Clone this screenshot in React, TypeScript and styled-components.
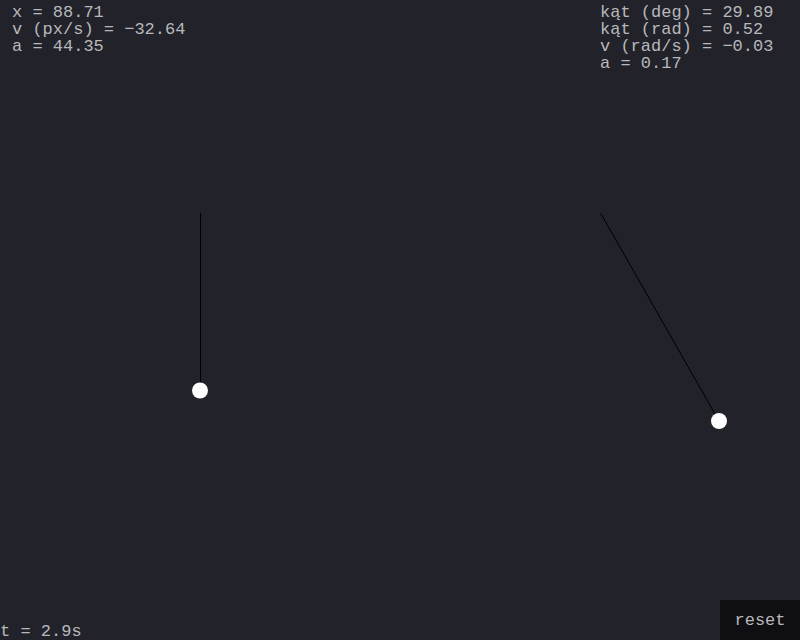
import React from "react";
import styled, { createGlobalStyle } from "styled-components";

const GlobalStyle = createGlobalStyle`
  html, body, #root { height: 100%; }
  body {
    margin: 0;
    overflow: hidden;
    background: #22222a;
    color: #b8b8ba;
    font: 17px/17px "Liberation Mono", "Courier New", monospace;
  }
`;

const Page = styled.main`
  position: relative;
  display: grid;
  grid-template-columns: 3fr 1fr;
  grid-template-rows: 1fr auto;
  height: 100%;
`;

const Readout = styled.div<{ $inset: number }>`
  padding: 4px 0 0 ${(p) => p.$inset}px;
  white-space: nowrap;
`;

const Footer = styled.footer`
  grid-column: 1 / -1;
  display: flex;
  justify-content: space-between;
  align-items: flex-end;
`;

const Clock = styled.span`
  line-height: 16px;
`;

const ResetButton = styled.button`
  width: 80px;
  height: 40px;
  padding: 0;
  border: 0;
  background: #0f0e12;
  color: inherit;
  font: inherit;
`;

const Scene = styled.svg`
  position: absolute;
  inset: 0;
  width: 100%;
  height: 100%;
  pointer-events: none;
`;

const spring = ["x = 88.71", "v (px/s) = −32.64", "a = 44.35"];
const pendulum = ["kąt (deg) = 29.89", "kąt (rad) = 0.52", "v (rad/s) = −0.03", "a = 0.17"];

export default function App() {
  return (
    <Page>
      <GlobalStyle />
      <Scene viewBox="0 0 800 640" aria-hidden="true">
        <g stroke="#000" strokeWidth="1">
          <path d="M200.5 213V390" />
          <path d="M600.5 213L719 421" />
        </g>
        <circle cx="200" cy="390.5" r="8" fill="#fff" />
        <circle cx="719" cy="421" r="8" fill="#fff" />
      </Scene>
      <Readout $inset={12}>
        {spring.map((line) => <div key={line}>{line}</div>)}
      </Readout>
      <Readout $inset={0}>
        {pendulum.map((line) => <div key={line}>{line}</div>)}
      </Readout>
      <Footer>
        <Clock>t = 2.9s</Clock>
        <ResetButton type="button">reset</ResetButton>
      </Footer>
    </Page>
  );
}
